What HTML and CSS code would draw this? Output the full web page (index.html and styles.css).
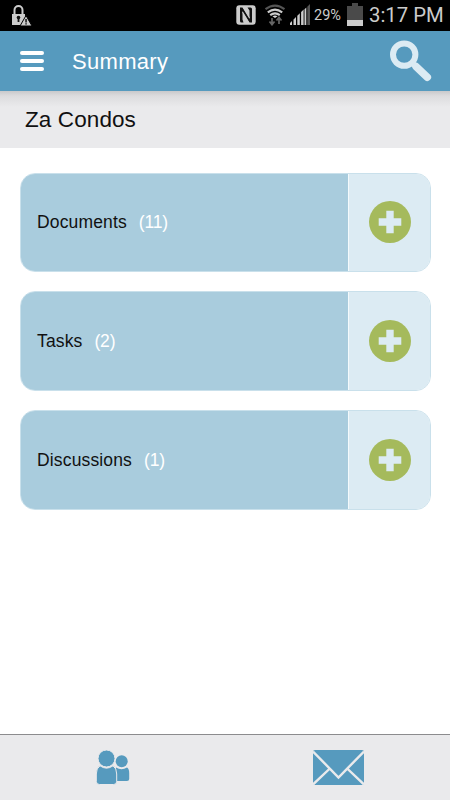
FILE: index.html
```
<!DOCTYPE html>
<html lang="en">
<head>
    <meta charset="UTF-8">
    <meta name="viewport" content="width=device-width, initial-scale=1.0">
    <title>Summary</title>
    <link rel="stylesheet" href="styles.css">
</head>
<body>
    <!-- Status bar -->
    <div class="status-bar">
        <svg class="icon-lock" width="21" height="22" viewBox="0 0 21 22">
            <path d="M3.5 10V5a4 4 0 0 1 8 0v5" fill="none" stroke="#ccc" stroke-width="2"/>
            <path d="M1 9h13v11H1z" fill="#ccc"/>
            <circle cx="7.5" cy="12.5" r="1.8" fill="#111"/>
            <path d="M6.6 13h1.8v4H6.6z" fill="#111"/>
            <path d="M15 10.5L21 21H9z" fill="#ccc" stroke="#000" stroke-width="1"/>
            <path d="M14.3 14h1.5v3.5h-1.5zM14.3 18.3h1.5v1.3h-1.5z" fill="#111"/>
        </svg>
        <svg class="icon-nfc" width="20" height="20" viewBox="0 0 20 20">
            <rect x="0.3" y="0.3" width="19.4" height="19.4" rx="3" fill="#ccc"/>
            <path d="M7.5 17.5H5.5Q4 17.5 4 16V2.5H6.5L13.5 14V5.5L11.5 2.5H14.5Q16 2.5 16 4V17.5H13.5L6.5 6V14.500z" fill="#111"/>
            <path d="M7.2 2.5L13.8 13M6.2 7L12.8 17.5" stroke="#ccc" stroke-width="0.7"/>
        </svg>
        <svg class="icon-wifi" width="22" height="22" viewBox="0 0 22 22">
            <g fill="none" stroke-width="2.1">
                <path d="M1.5 5.2Q11-2 20.5 5.2" stroke="#555"/>
                <path d="M3.8 8.3Q11 2.8 18.2 8.3" stroke="#ccc"/>
                <path d="M6.2 11.2Q11 7.5 15.8 11.2" stroke="#ccc"/>
            </g>
            <path d="M8.5 12.3q2.5-1.5 5 0l-2.5 1.7z" fill="#ddd"/>
            <path d="M8 14v6M5.5 17.5L8 20.7l2.5-3.2M15 20v-6M12.5 16.5L15 13.3l2.5 3.2" fill="none" stroke="#666" stroke-width="1.7"/>
        </svg>
        <svg class="icon-signal" width="21" height="21" viewBox="0 0 21 21">
            <path d="M0 21v-2l2-2v4zM3.5 21v-5.5l2.5-2.5v8zM7.3 21v-9.2l2.5-2.5V21zM11.1 21V8l2.5-2.5V21z" fill="#ccc"/>
            <path d="M14.5 21V5.2L16.3 3.5V21z" fill="#ccc"/>
            <path d="M17.3 21V2.8L20 0v21z" fill="#555"/>
        </svg>
        <span class="battery-level">29%</span>
        <svg class="icon-battery" width="16" height="23" viewBox="0 0 16 23">
            <path d="M5 0h6v3h5v14H0V3h5z" fill="#4a4a4a"/>
            <path d="M0 17h16v6H0z" fill="#ccc"/>
        </svg>
        <span class="clock">3:17 PM</span>
    </div>

    <!-- Header -->
    <div class="header">
        <div class="menu-icon"><i></i><i></i><i></i></div>
        <h1>Summary</h1>
        <svg class="icon-search" width="42" height="42" viewBox="0 0 42 42">
            <circle cx="14.2" cy="14.6" r="11.2" fill="none" stroke="#dcebf3" stroke-width="6"/>
            <path d="M22 22l5 5" stroke="#dcebf3" stroke-width="5"/>
            <path d="M26 26.5L37.3 37.2" stroke="#dcebf3" stroke-width="7.6" stroke-linecap="round"/>
        </svg>
    </div>

    <div class="project">Za Condos</div>

    <!-- Summary cards -->
    <div class="cards">
        <div class="card">
            <div class="card-label">Documents<span class="count">(11)</span></div>
            <div class="card-add">
                <svg width="42" height="42" viewBox="0 0 42 42">
                    <circle cx="21" cy="21" r="21" fill="#a5ba5c"/>
                    <path d="M21 9.7v22.6M9.7 21h22.6" stroke="#dcebf3" stroke-width="7.4"/>
                </svg>
            </div>
        </div>
        <div class="card">
            <div class="card-label">Tasks<span class="count">(2)</span></div>
            <div class="card-add">
                <svg width="42" height="42" viewBox="0 0 42 42">
                    <circle cx="21" cy="21" r="21" fill="#a5ba5c"/>
                    <path d="M21 9.7v22.6M9.7 21h22.6" stroke="#dcebf3" stroke-width="7.4"/>
                </svg>
            </div>
        </div>
        <div class="card">
            <div class="card-label">Discussions<span class="count">(1)</span></div>
            <div class="card-add">
                <svg width="42" height="42" viewBox="0 0 42 42">
                    <circle cx="21" cy="21" r="21" fill="#a5ba5c"/>
                    <path d="M21 9.7v22.6M9.7 21h22.6" stroke="#dcebf3" stroke-width="7.4"/>
                </svg>
            </div>
        </div>
    </div>

    <!-- Footer -->
    <div class="footer">
        <svg class="icon-people" width="34" height="35" viewBox="0 0 34 35">
            <g fill="#569abe">
                <circle cx="25.7" cy="11.2" r="6"/>
                <path d="M20 17.5Q25.5 21 31 17.5Q33.2 18.5 33.2 23V29Q33.2 31 31 31H20z"/>
                <path d="M4 15.8Q10.5 20.5 17 15.8Q20.7 18 20.7 24V31.5Q20.7 34.5 17.7 34.5H3.5Q0.3 34.5 0.3 31.5V24Q0.3 18 4 15.8z" stroke="#eaeaec" stroke-width="1"/>
                <circle cx="10.5" cy="8.5" r="8.5" stroke="#eaeaec" stroke-width="1"/>
            </g>
        </svg>
        <svg class="icon-mail" width="51" height="35" viewBox="0 0 50 35" preserveAspectRatio="none">
            <rect width="50" height="35" rx="2" fill="#569abe"/>
            <path d="M0 1.5L25 27.5L50 1.5M0 34.5L16 19M50 34.5L34 19" fill="none" stroke="#eaeaec" stroke-width="2.4"/>
        </svg>
    </div>
</body>
</html>
```
FILE: styles.css
```
:root {
    --blue: #569abe;
    --card-blue: #a9ccdd;
    --card-light: #dcebf3;
    --gray: #eaeaec;
}

* {
    margin: 0;
    padding: 0;
    box-sizing: border-box;
}

body {
    font-family: "Liberation Sans", Arial, sans-serif;
    background: #fff;
    color: #111;
    height: 100vh;
    display: flex;
    flex-direction: column;
    overflow: hidden;
}

svg {
    display: block;
    flex: none;
}

.status-bar {
    height: 31px;
    flex: none;
    display: flex;
    align-items: flex-start;
    background: #000;
    color: #ccc;
    font-family: Roboto, sans-serif;
    white-space: nowrap;
}

.icon-lock {
    margin: 5px 0 0 11px;
}

.icon-nfc {
    margin: 5px 0 0 204px;
}

.icon-wifi {
    margin: 4px 0 0 8px;
}

.icon-signal {
    margin: 4px 0 0 4px;
}

.battery-level {
    width: 30px;
    margin-left: 3px;
    font-size: 14.5px;
    line-height: 32px;
}

.icon-battery {
    margin: 3px 0 0 3px;
}

.clock {
    margin-left: 6px;
    font-size: 20.3px;
    line-height: 31px;
}

.header {
    height: 60px;
    flex: none;
    display: flex;
    align-items: center;
    padding: 0 18px 0 20px;
    background: var(--blue);
    color: #fff;
}

.menu-icon {
    width: 24px;
    display: flex;
    flex-direction: column;
    gap: 4px;
}

.menu-icon i {
    height: 4px;
    border-radius: 2px;
    background: #fff;
}

.header h1 {
    flex: 1;
    margin-left: 28px;
    padding-top: 2px;
    font-size: 22px;
    font-weight: normal;
    letter-spacing: 0.3px;
}

.project {
    height: 57px;
    flex: none;
    padding-left: 25px;
    font-size: 22.5px;
    letter-spacing: 0.1px;
    line-height: 58px;
    background: linear-gradient(#c9c9cb, #dcdcde 5px, var(--gray) 16px);
}

.cards {
    flex: 1;
    display: flex;
    flex-direction: column;
    gap: 19px;
    padding: 24.5px 19px 0 19.5px;
}

.card {
    height: 99.7px;
    display: flex;
    border-radius: 15px;
    border: 1px solid #c9e0eb;
    overflow: hidden;
}

.card-label {
    flex: 1;
    display: flex;
    align-items: center;
    padding: 1px 0 0 16.5px;
    font-size: 17.5px;
    letter-spacing: 0.15px;
    background: var(--card-blue);
}

.count {
    margin-left: 12px;
    color: #fff;
    letter-spacing: -0.2px;
}

.card-add {
    width: 82px;
    display: flex;
    align-items: center;
    justify-content: center;
    border-left: 1px solid #f4fafc;
    background: var(--card-light);
}

.footer {
    height: 66px;
    flex: none;
    display: flex;
    align-items: center;
    padding: 0 86px 0 96px;
    justify-content: space-between;
    border-top: 1px solid #8c8c8e;
    background: var(--gray);
}
```
